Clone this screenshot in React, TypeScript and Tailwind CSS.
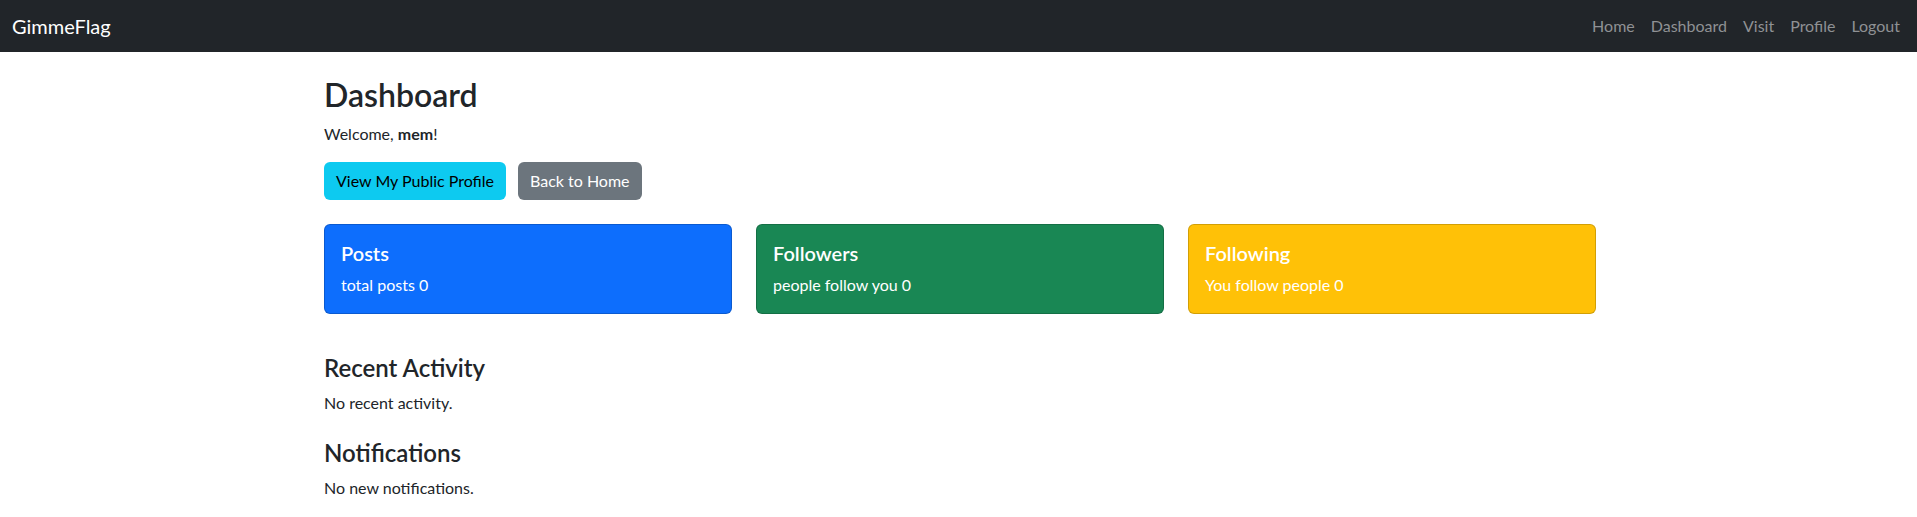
import React from "react";

const navLinks = ["Home", "Dashboard", "Visit", "Profile", "Logout"];

const stats = [
    { title: "Posts", text: "total posts 0", bg: "bg-[#0d6efd]" },
    { title: "Followers", text: "people follow you 0", bg: "bg-[#198754]" },
    { title: "Following", text: "You follow people 0", bg: "bg-[#ffc107]" },
];

export default function App() {
    return (
        <div className="min-h-screen bg-white text-[#212529] text-[16px] leading-6 font-['Lato',sans-serif]">
            {/* Navbar */}
            <nav className="h-[52px] bg-[#212529] flex items-center justify-between pl-3 pr-[9px]">
                <a href="#" className="text-white text-[20px] leading-[30px]">GimmeFlag</a>
                <ul className="flex items-center">
                    {navLinks.map(link => (
                        <li key={link}>
                            <a href="#" className="block px-2 text-[#8f9194] hover:text-white/75">{link}</a>
                        </li>
                    ))}
                </ul>
            </nav>

            <main className="w-[1275px] mx-auto pl-[3px] pt-6">
                <h1 className="text-[32px] leading-[1.2] font-semibold mb-2">Dashboard</h1>
                <p className="mb-4">Welcome, <strong className="font-bold">mem</strong>!</p>

                <div className="flex gap-3">
                    <a href="#" className="h-[38px] px-3 flex items-center rounded-md bg-[#0dcaf0] text-black">View My Public Profile</a>
                    <a href="#" className="h-[38px] px-3 flex items-center rounded-md bg-[#6c757d] text-white">Back to Home</a>
                </div>

                {/* Stat cards */}
                <div className="grid grid-cols-3 gap-6 mt-6">
                    {stats.map(s => (
                        <div key={s.title} className={`${s.bg} border border-[rgba(0,0,0,0.175)] rounded-md p-4 text-white`}>
                            <h5 className="text-[20px] leading-[1.2] font-semibold mb-2">{s.title}</h5>
                            <p>{s.text}</p>
                        </div>
                    ))}
                </div>

                <section className="mt-10">
                    <h4 className="text-[24px] leading-[1.2] font-semibold mb-2">Recent Activity</h4>
                    <p>No recent activity.</p>
                </section>

                <section className="mt-6">
                    <h4 className="text-[24px] leading-[1.2] font-semibold mb-2">Notifications</h4>
                    <p>No new notifications.</p>
                </section>
            </main>
        </div>
    );
}
